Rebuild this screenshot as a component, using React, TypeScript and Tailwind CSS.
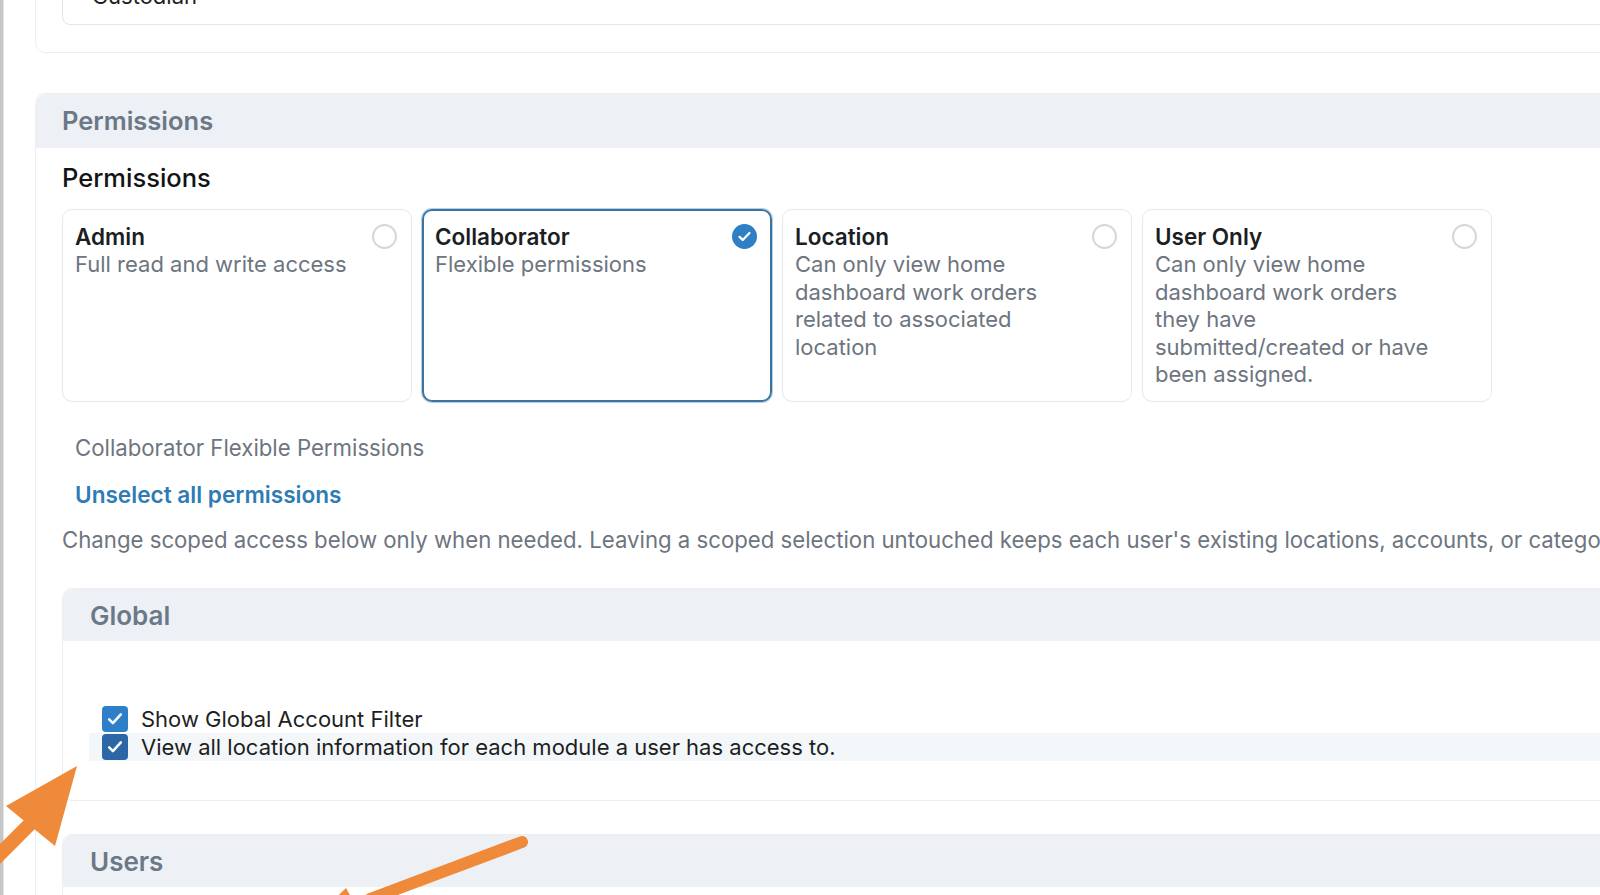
import React from "react";

const roles = [
  { name: "Admin", desc: "Full read and write access", selected: false },
  { name: "Collaborator", desc: "Flexible permissions", selected: true },
  {
    name: "Location",
    desc: "Can only view home dashboard work orders related to associated location",
    selected: false,
  },
  {
    name: "User Only",
    desc: "Can only view home dashboard work orders they have submitted/created or have been assigned.",
    selected: false,
  },
];

const CheckMark = () => (
  <svg viewBox="0 0 24 24" className="h-[20px] w-[20px]" fill="none">
    <path d="M5 12.5l4.5 4.5L19 6.5" stroke="white" strokeWidth="3" strokeLinecap="round" strokeLinejoin="round" />
  </svg>
);

const Radio = ({ checked }: { checked: boolean }) =>
  checked ? (
    <div className="mt-[1px] flex h-[25px] w-[25px] shrink-0 items-center justify-center rounded-full bg-[#2f7fc4]">
      <svg viewBox="0 0 24 24" className="h-[17px] w-[17px]" fill="none">
        <path d="M5 12.5l4.5 4.5L19 7" stroke="white" strokeWidth="3.2" strokeLinecap="round" strokeLinejoin="round" />
      </svg>
    </div>
  ) : (
    <div className="mt-[1px] h-[25px] w-[25px] shrink-0 rounded-full border-2 border-[#d3d7dc] bg-white" />
  );

const RoleCard = ({ role }) => (
  <div
    className={
      role.selected
        ? "flex h-[193px] w-[350px] gap-[4px] rounded-[10px] border-2 border-[#3a76a5] p-[11px] pr-[13px] pt-[12px] shadow-[0_0_0_1px_rgba(58,118,165,0.35)]"
        : "flex h-[193px] w-[350px] gap-[4px] rounded-[10px] border border-[#e6e8eb] p-[12px] pr-[14px] pt-[13px]"
    }
  >
    <div className="flex-1">
      <div className="text-[22.5px] font-semibold leading-[28px] text-[#1b1e22]">{role.name}</div>
      <div className="text-[22px] leading-[27.5px] text-[#6d7580]">{role.desc}</div>
    </div>
    <Radio checked={role.selected} />
  </div>
);

const CheckRow = ({ label, active }: { label: string; active?: boolean }) => (
  <div className={active ? "flex h-[28px] items-center gap-[13px] bg-[#f3f7fa] pl-[13px]" : "flex h-[28px] items-center gap-[13px] pl-[13px]"}>
    <div
      className={
        active
          ? "flex h-[26px] w-[26px] items-center justify-center rounded-[4px] bg-[#2b67a6]"
          : "flex h-[26px] w-[26px] items-center justify-center rounded-[4px] bg-[#2f7fc8]"
      }
    >
      <CheckMark />
    </div>
    <span className="text-[22px] leading-[28px] text-[#1d1f22]">{label}</span>
  </div>
);

const SectionHeader = ({ title }: { title: string }) => (
  <div className="flex h-[52px] items-center rounded-t-[10px] bg-[#edf0f4] px-[27px] text-[26px] font-semibold text-[#6b7888]">
    {title}
  </div>
);

export default function App() {
  return (
    <div className="relative flex h-[895px] w-full overflow-hidden bg-white font-['Inter','Noto_Sans',sans-serif]">
      <div className="w-[3px] shrink-0 bg-[#c6c6c6]" />
      <div className="w-[1px] shrink-0 bg-[#e4e4e4]" />
      <div className="w-[1700px] shrink-0 pl-[31px]">
        {/* previous card, cut off at the top */}
        <div className="-mt-[40px] rounded-[10px] border border-[#eceef1] pb-[27px] pl-[26px]">
          <div className="h-[64px] rounded-[8px] border border-[#e3e5e8] pl-[29px] pt-[21px] text-[22px] leading-[27px] text-[#1d1f22]">
            Custodian
          </div>
        </div>

        <div className="mt-[40px] rounded-[10px] border border-[#eceef1]">
          <div className="flex h-[54px] items-center rounded-t-[10px] bg-[#edf0f4] px-[26px] text-[25.5px] font-semibold text-[#6b7888]">
            Permissions
          </div>
          <div className="px-[26px]">
            <div className="pt-[15px] text-[25.5px] font-medium leading-[30px] text-[#111315]">Permissions</div>
            <div className="mt-[16px] flex gap-[10px]">
              {roles.map((r) => (
                <RoleCard key={r.name} role={r} />
              ))}
            </div>
            <div className="mt-[32px] pl-[13px] text-[22.2px] leading-[27px] text-[#6d7580]">
              Collaborator Flexible Permissions
            </div>
            <div className="mt-[20px] pl-[13px] text-[22.6px] font-semibold leading-[27px] text-[#2f7cb4]">
              Unselect all permissions
            </div>
            <div className="mt-[18px] whitespace-nowrap text-[22.2px] leading-[27px] text-[#6d7580]">
              Change scoped access below only when needed. Leaving a scoped selection untouched keeps each user's existing locations, accounts, or categories as they are.
            </div>

            <div className="mt-[35px] rounded-[10px] border border-[#eceef1]">
              <SectionHeader title="Global" />
              <div className="px-[26px] pb-[39px] pt-[64px]">
                <CheckRow label="Show Global Account Filter" />
                <CheckRow label="View all location information for each module a user has access to." active />
              </div>
            </div>

            <div className="mt-[33px] rounded-[10px] border border-[#eceef1]">
              <SectionHeader title="Users" />
              <div className="h-[200px]" />
            </div>
          </div>
        </div>
      </div>

      {/* orange annotation arrows */}
      <svg className="pointer-events-none absolute inset-0 h-[895px] w-[1600px]" viewBox="0 0 1600 895">
        <line x1="-12" y1="866" x2="36" y2="818" stroke="#ef8a3a" strokeWidth="14" />
        <polygon points="77,766 6,806 55,846" fill="#ef8a3a" />
        <line x1="522" y1="842" x2="370" y2="899" stroke="#ef8a3a" strokeWidth="12" strokeLinecap="round" />
        <polygon points="346,888 372,935 298,935" fill="#ef8a3a" />
      </svg>
    </div>
  );
}
